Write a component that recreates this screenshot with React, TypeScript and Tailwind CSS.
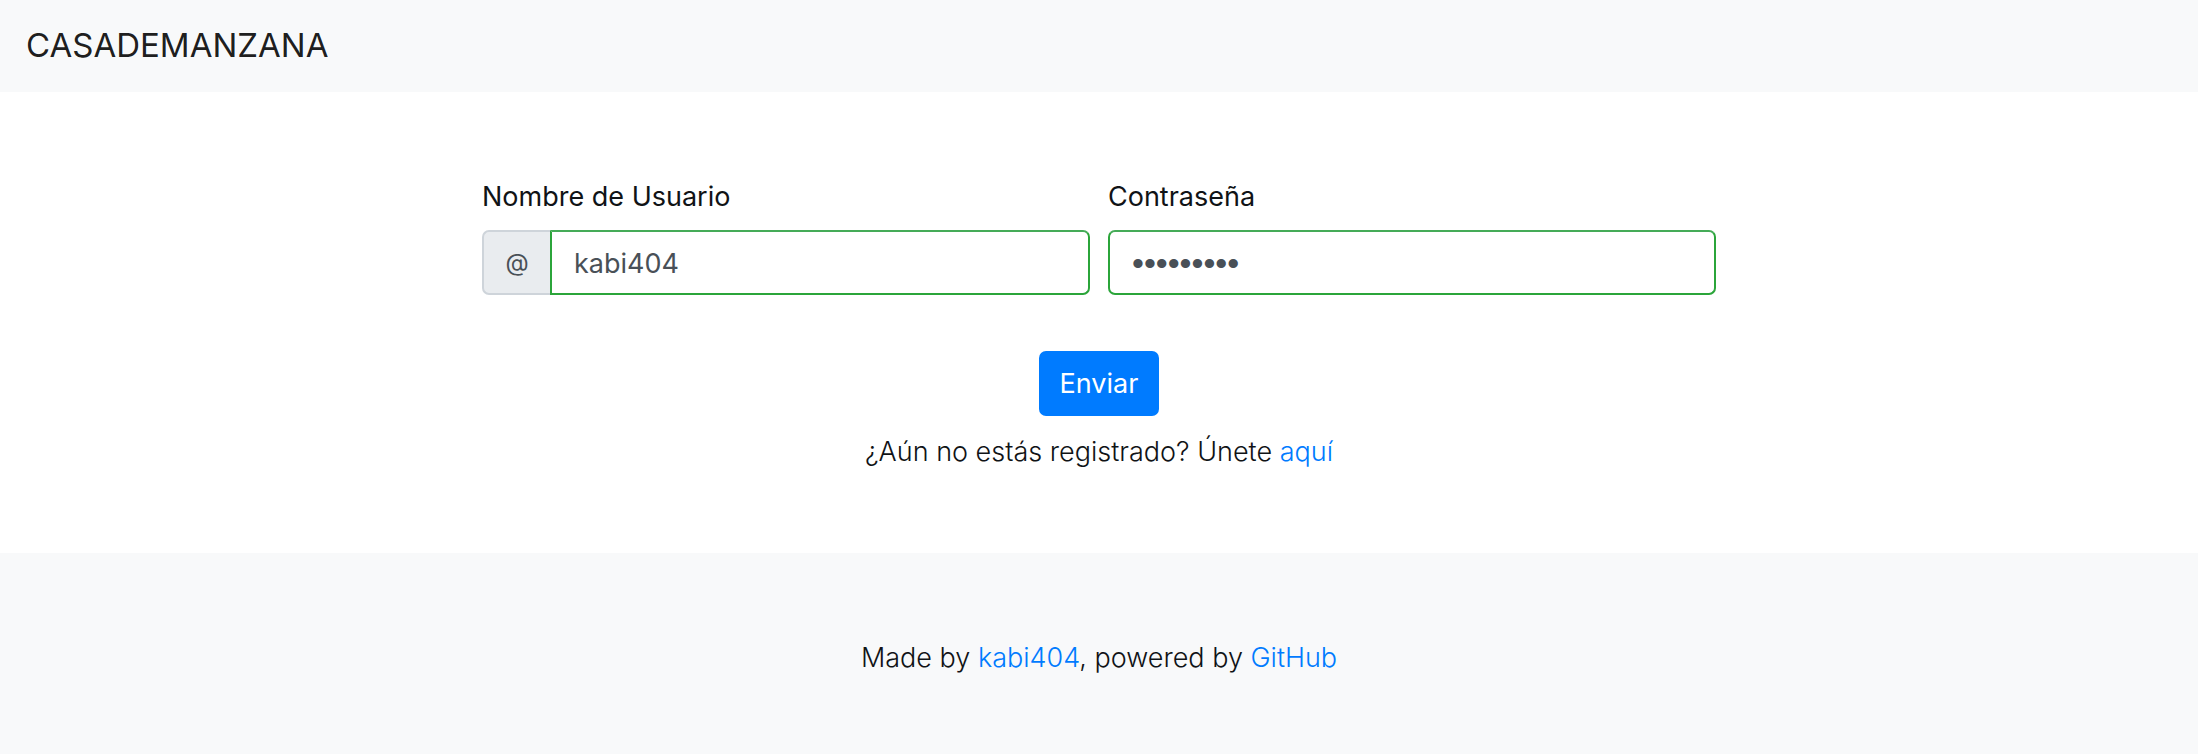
import { useState } from "react";

const fieldClass =
  "h-[65px] w-full min-w-0 border-2 border-[#2ba53a] border-t-[#45ab58] bg-white px-[22px] leading-[41px] text-[#495057] outline-none";

function Header() {
  return (
    <header className="flex h-[92px] items-center bg-[#f8f9fa] px-[26px] pb-0.5">
      <a href="#inicio" className="text-[33px] leading-[52px] font-[375] text-black/90">
        CASADEMANZANA
      </a>
    </header>
  );
}

function LoginForm() {
  const [username, setUsername] = useState("kabi404");
  const [password, setPassword] = useState("manzana40");

  return (
    <form
      className="mx-auto w-full max-w-[1234px]"
      onSubmit={(event) => event.preventDefault()}
    >
      <div className="grid grid-cols-1 gap-[18px] md:grid-cols-2">
        <div>
          <label htmlFor="username" className="mb-[13px] block font-[375]">
            Nombre de Usuario
          </label>
          <div className="flex">
            <span className="flex w-[68px] shrink-0 items-center justify-center rounded-l-[7px] border-2 border-r-0 border-[#ced4da] bg-[#e9ecef] text-2xl font-normal text-[#495057]">
              @
            </span>
            <input
              id="username"
              type="text"
              autoComplete="username"
              value={username}
              onChange={(event) => setUsername(event.target.value)}
              className={`${fieldClass} rounded-r-[7px] pt-0.5 text-[27px] font-[375]`}
            />
          </div>
        </div>
        <div>
          <label htmlFor="password" className="mb-[13px] block font-[375]">
            Contraseña
          </label>
          <input
            id="password"
            type="password"
            autoComplete="current-password"
            value={password}
            onChange={(event) => setPassword(event.target.value)}
            className={`${fieldClass} rounded-[7px] pt-0.5 font-['Liberation_Sans',sans-serif] text-[34px]`}
          />
        </div>
      </div>
      <div className="mt-14 text-center">
        <button
          type="submit"
          className="h-[65px] rounded-[7px] bg-[#007bff] px-[21px] font-[375] text-white"
        >
          Enviar
        </button>
        <p className="mt-[15px] font-light">
          ¿Aún no estás registrado? Únete{" "}
          <a href="#registro" className="text-[#007bff]">
            aquí
          </a>
        </p>
      </div>
    </form>
  );
}

function Footer() {
  return (
    <footer className="grow bg-[#f8f9fa] px-6 pt-[84px] pb-[75px] text-center font-light">
      <p>
        Made by{" "}
        <a href="#kabi404" className="text-[#007bff]">
          kabi404
        </a>
        , powered by{" "}
        <a href="#github" className="text-[#007bff]">
          GitHub
        </a>
      </p>
    </footer>
  );
}

export default function App() {
  return (
    <div className="flex min-h-screen flex-col bg-white font-['Inter','Liberation_Sans',sans-serif] text-[27px] leading-[41px] text-[#101316]">
      <Header />
      <main className="px-6 pt-[84px] pb-[81px]">
        <LoginForm />
      </main>
      <Footer />
    </div>
  );
}
